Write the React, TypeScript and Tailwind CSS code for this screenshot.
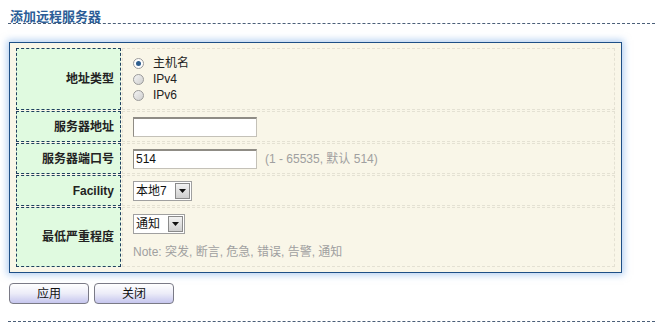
import React from 'react';

const font = { fontFamily: '"Liberation Sans", "Noto Sans CJK SC", sans-serif' };

const Label: React.FC<{ text: string; h: string }> = ({ text, h }) => (
  <div
    className={`${h} flex items-center justify-end pr-[6px] bg-[#e0fae0] border border-dashed border-[#1f3f5f] text-[12px] font-bold text-[#222]`}
  >
    {text}
  </div>
);

const Cell: React.FC<{ h: string; children: React.ReactNode; className?: string }> = ({ h, children, className }) => (
  <div className={`${h} border border-dashed border-[#e4e1d3] pl-[10px] ${className ?? ''}`}>{children}</div>
);

const Radio: React.FC<{ checked?: boolean; label: string }> = ({ checked, label }) => (
  <div className="flex items-center h-[16px]">
    <span
      className={`w-[11px] h-[11px] rounded-full border border-[#9a9a9a] flex items-center justify-center ${
        checked ? 'bg-white' : 'bg-gradient-to-br from-[#f4f4f4] to-[#cfcfcf]'
      }`}
    >
      {checked && <span className="w-[5px] h-[5px] rounded-full bg-[#2d5e8e]" />}
    </span>
    <span className="ml-[9px] text-[12px] text-[#222]">{label}</span>
  </div>
);

const TextInput: React.FC<{ value?: string }> = ({ value }) => (
  <div className="w-[124px] h-[20px] bg-white border border-[#c4c1b8] border-t-[#8f8c85] border-l-[#8f8c85] border-t-2 text-[12px] leading-[16px] pl-[2px] text-[#111]">
    {value}
  </div>
);

const Select: React.FC<{ value: string; w: string }> = ({ value, w }) => (
  <div className={`${w} h-[20px] flex items-center bg-white border border-[#a0a0a0] text-[12px] text-[#111]`}>
    <span className="flex-1 pl-[2px]">{value}</span>
    <span className="w-[15px] h-[16px] mr-[1px] flex items-center justify-center border border-[#8a8a8a] bg-gradient-to-b from-[#f2f2f2] to-[#cfcfcf]">
      <svg width="7" height="4" viewBox="0 0 7 4">
        <path d="M0 0H7L3.5 4Z" fill="#111" />
      </svg>
    </span>
  </div>
);

const Button: React.FC<{ text: string }> = ({ text }) => (
  <div className="w-[80px] h-[21px] flex items-center justify-center rounded-[4px] border border-[#7a7a86] bg-gradient-to-b from-[#ffffff] via-[#ececf8] to-[#c6c6ee] text-[12px] text-[#111]">
    {text}
  </div>
);

export default function App() {
  return (
    <div className="w-[666px] h-[328px] bg-white relative overflow-hidden" style={font}>
      {/* Title */}
      <div className="ml-[8px] mr-[11px] pt-[4px] pl-[2px] h-[24px] border-b border-dashed border-[#4a5e78]">
        <span className="text-[13px] font-bold text-[#2b5d97]">添加远程服务器</span>
      </div>

      {/* Panel */}
      <div className="ml-[9px] mt-[18px] w-[613px] border border-[#1e4f86] bg-[#f9f6e8] shadow-[0_0_7px_2px_rgba(120,170,230,0.55)] px-[6px] pt-[5px] pb-[5px]">
        <div className="grid grid-cols-[105px_1fr] gap-x-[1px] gap-y-[1px]">
          <Label text="地址类型" h="h-[62px]" />
          <Cell h="h-[62px]" className="flex flex-col justify-center">
            <Radio checked label="主机名" />
            <Radio label="IPv4" />
            <Radio label="IPv6" />
          </Cell>

          <Label text="服务器地址" h="h-[31px]" />
          <Cell h="h-[31px]" className="flex items-center">
            <TextInput />
          </Cell>

          <Label text="服务器端口号" h="h-[31px]" />
          <Cell h="h-[31px]" className="flex items-center">
            <TextInput value="514" />
            <span className="ml-[8px] text-[12px] text-[#a0a0a0]">(1 - 65535, 默认 514)</span>
          </Cell>

          <Label text="Facility" h="h-[31px]" />
          <Cell h="h-[31px]" className="flex items-center">
            <Select value="本地7" w="w-[59px]" />
          </Cell>

          <Label text="最低严重程度" h="h-[60px]" />
          <Cell h="h-[60px]" className="flex flex-col justify-center">
            <Select value="通知" w="w-[52px]" />
            <div className="mt-[9px] text-[12px] text-[#a0a0a0]">Note: 突发, 断言, 危急, 错误, 告警, 通知</div>
          </Cell>
        </div>
      </div>

      {/* Buttons */}
      <div className="flex gap-[5px] ml-[9px] mt-[10px]">
        <Button text="应用" />
        <Button text="关闭" />
      </div>

      <div className="ml-[8px] mr-[11px] mt-[17px] border-b border-dashed border-[#4a5e78]" />
    </div>
  );
}
